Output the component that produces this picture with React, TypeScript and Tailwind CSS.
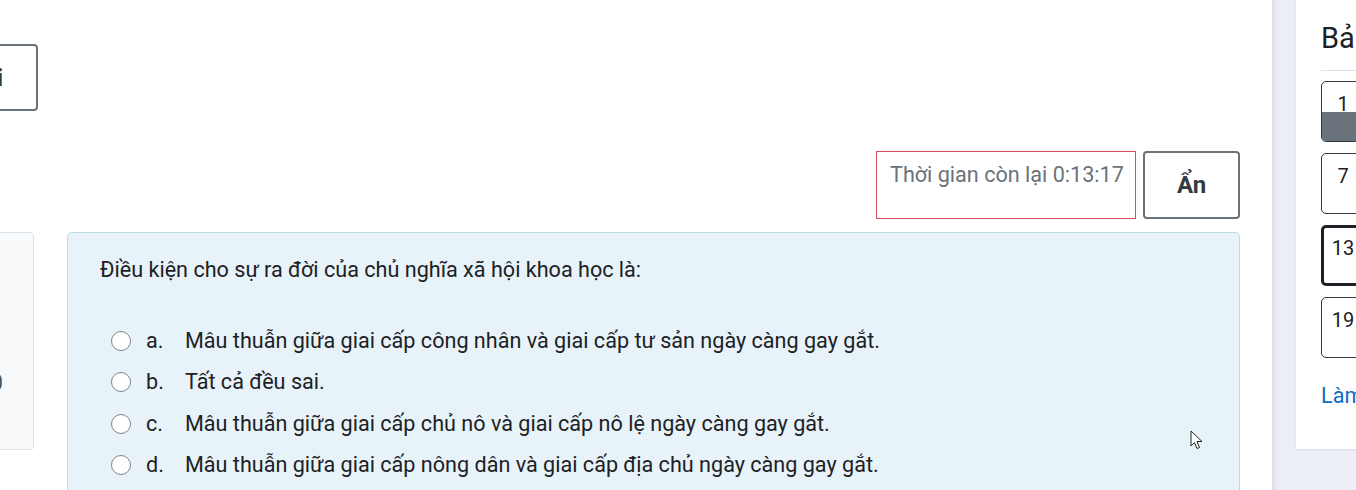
import React from "react";

const options = [
  { key: "a.", text: "Mâu thuẫn giữa giai cấp công nhân và giai cấp tư sản ngày càng gay gắt." },
  { key: "b.", text: "Tất cả đều sai." },
  { key: "c.", text: "Mâu thuẫn giữa giai cấp chủ nô và giai cấp nô lệ ngày càng gay gắt." },
  { key: "d.", text: "Mâu thuẫn giữa giai cấp nông dân và giai cấp địa chủ ngày càng gay gắt." },
];

const navButtons = [
  { num: "1", answered: true, current: false },
  { num: "7", answered: false, current: false },
  { num: "13", answered: false, current: true },
  { num: "19", answered: false, current: false },
];

export default function App() {
  return (
    <div className="relative flex h-[490px] w-[1356px] overflow-hidden bg-white font-['Roboto',sans-serif] text-[#1d2125]">
      {/* main column */}
      <div className="flex w-[1272px] shrink-0 flex-col pr-[32px]">
        <div className="pt-[44px]">
          <div className="ml-[-82px] flex h-[67px] w-[120px] items-center justify-end rounded border-2 border-[#6a737b] pr-[33px] text-[24px] font-bold text-[#343a40]">
            Mở lại
          </div>
        </div>

        <div className="mt-[40px] flex justify-end gap-[7px]">
          <div className="h-[68px] w-[260px] whitespace-nowrap border border-[#d24d57] px-[13px] pt-[8px] text-[21.6px] leading-[30px] text-[#6a737b]">
            Thời gian còn lại 0:13:17
          </div>
          <button className="flex h-[68px] w-[97px] items-center justify-center rounded border-2 border-[#6a737b] text-[24px] font-bold text-[#343a40]">
            Ẩn
          </button>
        </div>

        <div className="mt-[13px] flex gap-[33px]">
          <div className="ml-[-220px] flex h-[218px] w-[254px] shrink-0 flex-col rounded border border-[#dee2e6] bg-[#f8f9fa] pr-[30px] pt-[135px] text-right text-[21.6px] leading-[30px] text-[#495057]">
            Đạt điểm 1,00
          </div>
          <div className="h-[280px] flex-1 rounded-t-[5px] border border-[#b8dce2] bg-[#e7f3f8] pl-[32px] pt-[22px]">
            <div className="text-[21.6px] leading-[30px]">
              Điều kiện cho sự ra đời của chủ nghĩa xã hội khoa học là:
            </div>
            <div className="mt-[35px] flex flex-col">
              {options.map((o) => (
                <div key={o.key} className="flex h-[41.5px] items-center text-[21.6px]">
                  <span className="ml-[11px] h-[20px] w-[20px] shrink-0 rounded-full border-[1.5px] border-[#7d848a] bg-white" />
                  <span className="ml-[15px] w-[39px] shrink-0">{o.key}</span>
                  <span className="whitespace-nowrap">{o.text}</span>
                </div>
              ))}
            </div>
          </div>
        </div>
      </div>

      {/* drawer area */}
      <div className="flex-1 bg-[#eceef5] pl-[24px] shadow-[inset_5px_0_5px_-3px_rgba(0,0,0,0.08)]">
        <div className="h-[449px] bg-white pl-[25px] pt-[20px] shadow-[0_1px_2px_rgba(0,0,0,0.08)]">
          <h2 className="whitespace-nowrap text-[29px] leading-[36px] text-[#1d2125]">Bảng điều hướng</h2>
          <div className="h-[15px] border-b border-[#dee2e6]" />
          <div className="mt-[10px] flex flex-col gap-[11px]">
            {navButtons.map((b) => (
              <div
                key={b.num}
                className={
                  b.current
                    ? "flex h-[61px] w-[44px] flex-col overflow-hidden rounded-[5px] border-[3px] border-[#1d2125]"
                    : "flex h-[61px] w-[44px] flex-col overflow-hidden rounded-[5px] border border-[#343a40]"
                }
              >
                <div className={b.current ? "h-[28px] pt-[9px] text-center text-[20px] leading-[22px]" : "h-[30px] pt-[11px] text-center text-[20px] leading-[22px]"}>
                  {b.num}
                </div>
                {b.answered ? <div className="flex-1 bg-[#6a737b]" /> : null}
              </div>
            ))}
          </div>
          <div className="mt-[23px] whitespace-nowrap text-[21.6px] leading-[30px] text-[#0f6cbf]">Làm bài xong ...</div>
        </div>
      </div>

      {/* mouse pointer */}
      <svg className="absolute left-[1190px] top-[430px]" width="14" height="22" viewBox="0 0 14 22">
        <path d="M1 1 L1 16 L4.5 12.5 L7 18.5 L9.5 17.5 L7 11.5 L12 11.5 Z" fill="white" stroke="#222" strokeWidth="1" strokeLinejoin="round" />
      </svg>
    </div>
  );
}
